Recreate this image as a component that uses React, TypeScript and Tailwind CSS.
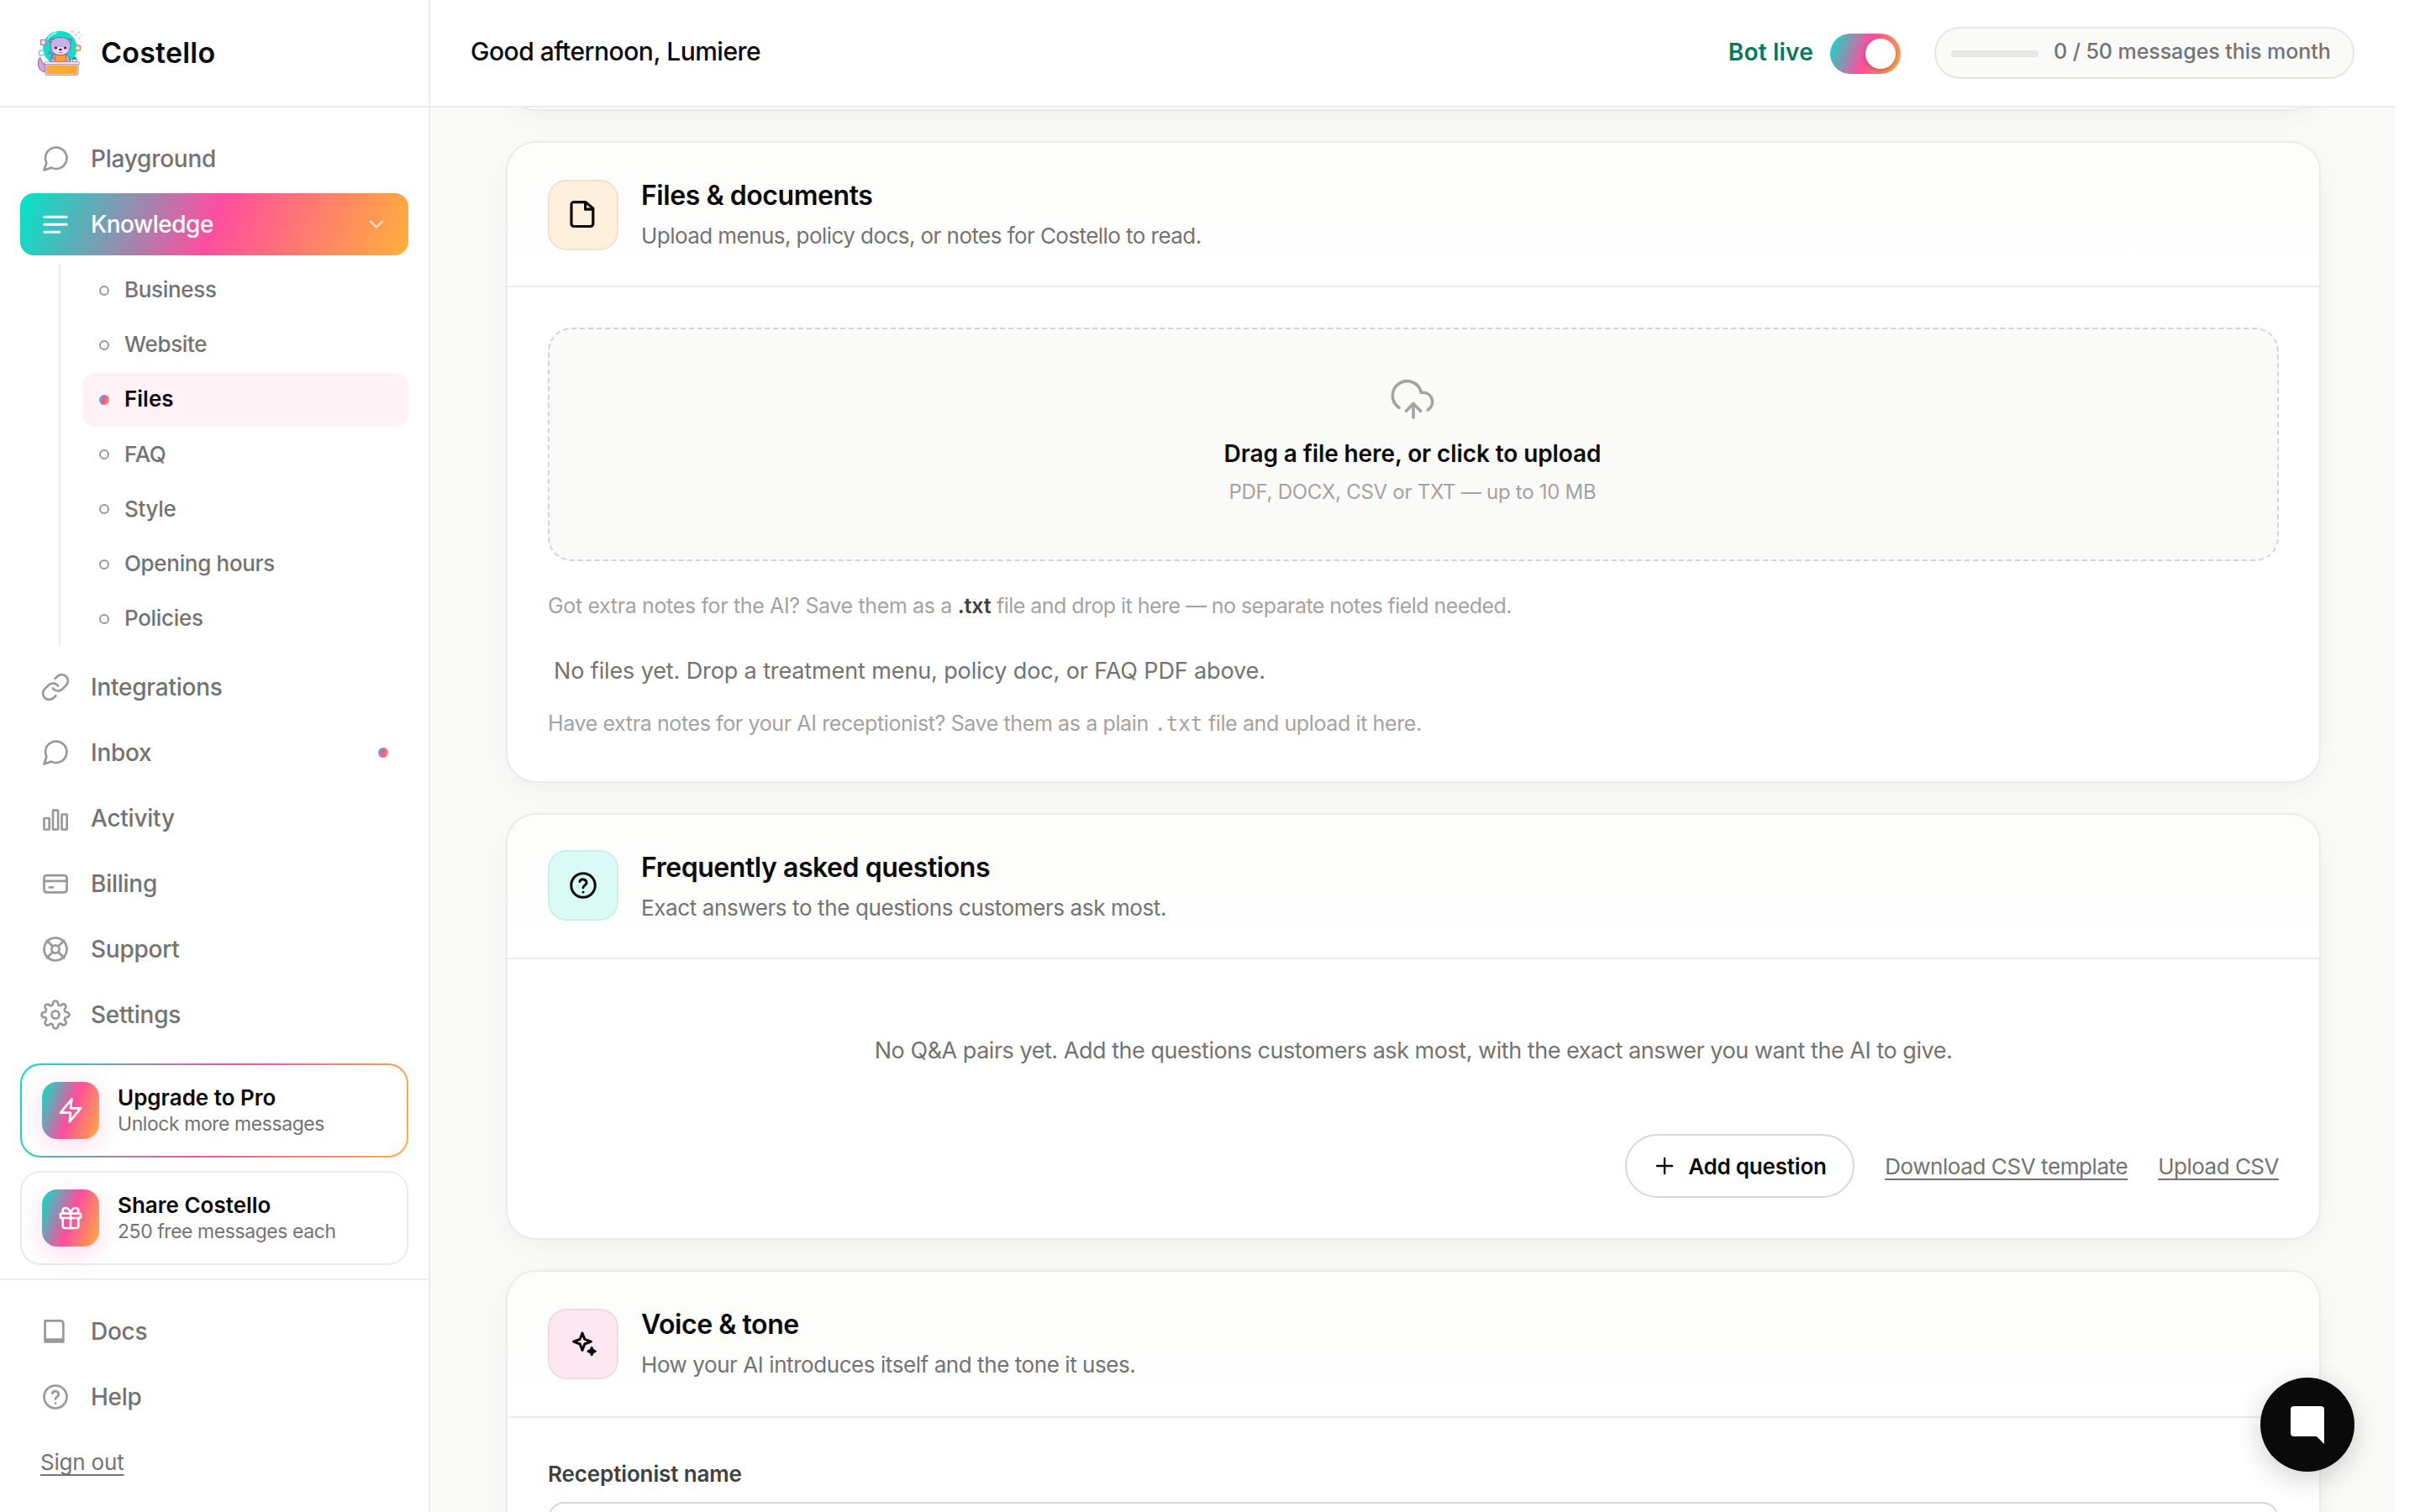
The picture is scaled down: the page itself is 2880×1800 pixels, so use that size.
import React from "react";
import { Gift, Link as LinkIcon } from "lucide-react";

type IconProps = { className?: string };

const Svg = ({
  children,
  className = "",
  width = 1.8,
}: {
  children: React.ReactNode;
  className?: string;
  width?: number;
}) => (
  <svg
    viewBox="0 0 24 24"
    fill="none"
    stroke="currentColor"
    strokeWidth={width}
    strokeLinecap="round"
    strokeLinejoin="round"
    className={`shrink-0 ${className}`}
  >
    {children}
  </svg>
);

const ChatIcon = ({ className }: IconProps) => (
  <Svg className={className}>
    <path d="M21 11.5a8.38 8.38 0 0 1-.9 3.8 8.5 8.5 0 0 1-7.6 4.7 8.38 8.38 0 0 1-3.8-.9L3 21l1.9-5.7a8.38 8.38 0 0 1-.9-3.8 8.5 8.5 0 0 1 4.7-7.6 8.38 8.38 0 0 1 3.8-.9h.5a8.48 8.48 0 0 1 8 8v.5z" />
  </Svg>
);

const LinesIcon = ({ className }: IconProps) => (
  <Svg className={className} width={2}>
    <path d="M3.2 6.2h17.6M3.2 12.2h17.6M3.2 18.2h12" />
  </Svg>
);

const ChainIcon = ({ className }: IconProps) => (
  <LinkIcon strokeWidth={1.8} className={`shrink-0 ${className}`} />
);

const BarsIcon = ({ className }: IconProps) => (
  <Svg className={className}>
    <rect x="3" y="12" width="4.1" height="9" rx=".3" />
    <rect x="10" y="5.8" width="4.1" height="15.2" rx=".3" />
    <rect x="17" y="9" width="4.1" height="12" rx=".3" />
  </Svg>
);

const CardIcon = ({ className }: IconProps) => (
  <Svg className={className}>
    <rect x="3" y="5.4" width="18" height="13.5" rx="2" />
    <path d="M3 9.9h18M7.2 14.9h2.8" />
  </Svg>
);

const BuoyIcon = ({ className }: IconProps) => (
  <Svg className={className}>
    <circle cx="12" cy="12" r="9" />
    <circle cx="12" cy="12" r="3.1" />
    <path d="M5.2 5.2l4.5 4.5M14.3 14.3l4.5 4.5M18.8 5.2l-4.5 4.5M9.7 14.3l-4.5 4.5" />
  </Svg>
);

const GearIcon = ({ className }: IconProps) => (
  <Svg className={className}>
    <circle cx="12" cy="12" r="3" />
    <path d="M19.4 15a1.65 1.65 0 0 0 .33 1.82l.06.06a2 2 0 1 1-2.83 2.83l-.06-.06a1.65 1.65 0 0 0-1.82-.33 1.65 1.65 0 0 0-1 1.51V21a2 2 0 0 1-4 0v-.09A1.65 1.65 0 0 0 9 19.4a1.65 1.65 0 0 0-1.82.33l-.06.06a2 2 0 1 1-2.83-2.83l.06-.06a1.65 1.65 0 0 0 .33-1.82 1.65 1.65 0 0 0-1.51-1H3a2 2 0 0 1 0-4h.09A1.65 1.65 0 0 0 4.6 9a1.65 1.65 0 0 0-.33-1.82l-.06-.06a2 2 0 1 1 2.83-2.83l.06.06a1.65 1.65 0 0 0 1.82.33H9a1.65 1.65 0 0 0 1-1.51V3a2 2 0 0 1 4 0v.09a1.65 1.65 0 0 0 1 1.51 1.65 1.65 0 0 0 1.82-.33l.06-.06a2 2 0 1 1 2.83 2.83l-.06.06a1.65 1.65 0 0 0-.33 1.82V9a1.65 1.65 0 0 0 1.51 1H21a2 2 0 0 1 0 4h-.09a1.65 1.65 0 0 0-1.51 1z" />
  </Svg>
);

const BookIcon = ({ className }: IconProps) => (
  <Svg className={className}>
    <path d="M3.7 3.6h12.5a2 2 0 0 1 2 2v14.8M3.7 3.6v16.7h13.9M3.7 18.4h14.5" />
  </Svg>
);

const QuestionIcon = ({ className, width }: IconProps & { width?: number }) => (
  <Svg className={className} width={width}>
    <circle cx="12" cy="12" r="9" />
    <path d="M9.4 9.2a2.7 2.7 0 0 1 5.2.8c0 1.8-2.6 2-2.6 3.7" />
    <path d="M12 17.1h.01" />
  </Svg>
);

const ZapIcon = ({ className }: IconProps) => (
  <Svg className={className} width={2}>
    <path d="M13 2L3 14h9l-1 8 10-12h-9l1-8z" />
  </Svg>
);

const FileIcon = () => (
  <svg viewBox="0 0 40 40" fill="none" stroke="currentColor" strokeWidth="3.2" strokeLinejoin="round" className="size-10">
    <path d="M9 4.6h13.6l9.2 7.4v18.5a3 3 0 0 1-3 3H9a3 3 0 0 1-3-3V7.6a3 3 0 0 1 3-3z" />
    <path d="M22.6 4.6v8.6h9.2" />
  </svg>
);

const SparkleIcon = () => (
  <svg viewBox="0 0 40 40" fill="none" stroke="currentColor" strokeWidth="3" strokeLinejoin="round" className="size-10">
    <path d="M19 7l2.8 7.4 7.6 2.8-7.6 2.8L19 27.4 16.2 20l-7.6-2.8 7.6-2.8z" />
    <path fill="currentColor" d="M30.2 24.6l1.2 2.9 2.9 1.2-2.9 1.2-1.2 2.9-1.2-2.9-2.9-1.2 2.9-1.2z" />
  </svg>
);

const CloudIcon = () => (
  <svg
    viewBox="0 0 56 56"
    fill="none"
    stroke="currentColor"
    strokeWidth="3.6"
    strokeLinecap="round"
    strokeLinejoin="round"
    className="size-14 text-[#a3a3a3]"
  >
    <path d="M11 38.3A17.2 17.2 0 1 1 37.3 20.3h3.2a11.2 11.2 0 0 1 4.8 20.7" />
    <path d="M28 33.4v16.8M19.5 42.3L28 33.4l8.5 8.9" />
  </svg>
);

const OtterLogo = () => (
  <svg viewBox="0 0 56 56" className="size-14 shrink-0">
    <circle cx="27.3" cy="22" r="20.2" fill="#0ee0cb" />
    <path d="M13 12c2-4.5 6-7 10-8" fill="none" stroke="#c6fff7" strokeWidth="1.3" strokeLinecap="round" />
    <path d="M9 41c-3 0-3.5-3-4.5-6.500S1 36 1.600 42s4 8.500 8.400 8.500z" fill="#d9a5dc" stroke="#6b5a94" strokeWidth=".9" />
    <path d="M16.5 39c0-8 4-11 11-11s12 3 12 11z" fill="#d3a0dc" stroke="#5e4f86" strokeWidth=".8" />
    <circle cx="17.5" cy="13.5" r="2.6" fill="#b794d6" stroke="#5e4f86" strokeWidth=".8" />
    <circle cx="38.5" cy="13.5" r="2.6" fill="#b794d6" stroke="#5e4f86" strokeWidth=".8" />
    <path
      d="M28 9.500c8 0 12 4 12 10.500S35.500 30.500 28 30.500 16 26.500 16 20 20 9.500 28 9.500z"
      fill="#c9b0e8"
      stroke="#5e4f86"
      strokeWidth=".7"
    />
    <ellipse cx="28" cy="25.5" rx="8.5" ry="4.6" fill="#f3d6ec" />
    <circle cx="22.5" cy="22" r="1.5" fill="#2b2140" />
    <circle cx="33.5" cy="22" r="1.5" fill="#2b2140" />
    <ellipse cx="28" cy="24" rx="1.8" ry="1.2" fill="#2b2140" />
    <path d="M25.5 27c1.5 1 3.5 1 5 0" fill="none" stroke="#5e4f86" strokeWidth=".7" />
    <path d="M14 29.5c-1.5-2 1.5-3.500 2.500-1.500s2 6 4 7.500" fill="#b794d6" stroke="#5e4f86" strokeWidth=".9" />
    <rect x="21.7" y="30.5" width="12.8" height="8.3" rx="1" fill="#ffa02e" stroke="#8a5a3a" strokeWidth=".7" />
    <path d="M42.5 36.5c-.5-3 1-4 2.500-4s2.500 1.500 2 4" fill="#3f8e8f" />
    <rect x="42.2" y="35.5" width="5" height="3.2" fill="#e8f4f4" stroke="#5e4f86" strokeWidth=".6" />
    <rect x="9" y="38.7" width="41.5" height="3.2" rx="1" fill="#f7ecf5" stroke="#8d7aa8" strokeWidth=".7" />
    <rect x="10.5" y="42" width="38" height="12" rx="1" fill="#ffa833" stroke="#e3d3e6" strokeWidth="1.4" />
    <rect x="9.8" y="41.5" width="39.4" height="13" rx="1.5" fill="none" stroke="#8d7aa8" strokeWidth=".6" />
    <rect x="4.5" y="12.5" width="5.8" height="5.8" rx="1.3" fill="#fff" stroke="#d9669c" strokeWidth="1.5" />
    <rect x="2.5" y="25.3" width="5.8" height="5.4" rx="1.3" fill="#fff" stroke="#76cfd0" strokeWidth="1.5" />
    <rect x="45.6" y="19.3" width="6" height="5.8" rx="1.3" fill="#ffe9c4" stroke="#c08a4a" strokeWidth="1.5" />
    <circle cx="42" cy="2.8" r="1.3" fill="none" stroke="#f5a3c4" strokeWidth=".8" />
    <circle cx="46.5" cy="6.5" r="1.1" fill="#b9b4ea" />
    <circle cx="49.5" cy="3.5" r=".8" fill="#ff5a8f" />
    <circle cx="53.5" cy="6.8" r=".7" fill="#f5a3c4" />
    <circle cx="50.3" cy="10.5" r="1.2" fill="#a7ece4" />
    <circle cx="53" cy="14.5" r=".7" fill="#f5a3c4" />
  </svg>
);

const NavItem = ({
  label,
  Icon,
  dot,
}: {
  label: string;
  Icon: (p: IconProps) => React.ReactNode;
  dot?: boolean;
}) => (
  <a className="flex h-[74px] items-center gap-6 px-6 text-[28px] font-medium tracking-[-0.25px] text-[#737373]">
    <Icon className="size-9 text-[#999]" />
    <span className="flex-1">{label}</span>
    {dot && (
      <span className="size-3 rounded-full bg-[linear-gradient(110deg,#00e5c7_0%,#ff4d9f_50%,#ffb03a_100%)]" />
    )}
  </a>
);

const subItems = ["Business", "Website", "Files", "FAQ", "Style", "Opening hours", "Policies"];

const PromoCard = ({
  title,
  text,
  highlight,
  children,
}: {
  title: string;
  text: string;
  highlight?: boolean;
  children: React.ReactNode;
}) => (
  <div
    className={
      highlight
        ? "flex h-28 items-center gap-[22px] rounded-[24px] border-2 border-transparent pl-6 [background:linear-gradient(#fff,#fff)_padding-box,linear-gradient(110deg,#00e5c7_0%,#ff4d9f_50%,#ffb03a_100%)_border-box]"
        : "flex h-28 items-center gap-[22px] rounded-[24px] border-2 border-[#ebebeb] bg-white pl-6"
    }
  >
    <div className="flex size-[68px] items-center justify-center rounded-[18px] bg-[linear-gradient(110deg,#00e5c7_0%,#ff4d9f_50%,#ffb03a_100%)] text-white shadow-[0_8px_28px_rgba(255,77,159,0.2)]">
      {children}
    </div>
    <div className="pb-px">
      <div className="text-[26px] leading-8 font-semibold text-[#0a0a0a]">{title}</div>
      <div className="text-[23px] leading-[30px] tracking-[-0.44px] text-[#737373]">{text}</div>
    </div>
  </div>
);

const Sidebar = () => (
  <aside className="flex w-[512px] shrink-0 flex-col border-r-2 border-[#ebebeb] bg-white">
    <div className="flex h-32 shrink-0 items-center gap-5 border-b-2 border-[#ebebeb] pl-11">
      <OtterLogo />
      <span className="pb-0.5 text-[34px] font-semibold tracking-[0.2px] text-[#0a0a0a]">Costello</span>
    </div>

    <nav className="flex flex-col gap-1 px-6 pt-6">
      <NavItem label="Playground" Icon={ChatIcon} />
      <a className="flex h-[74px] items-center gap-6 rounded-[16px] bg-[linear-gradient(110deg,#00e5c7_0%,#ff4d9f_50%,#ffb03a_100%)] px-6 text-[28px] font-medium tracking-[-0.5px] text-white">
        <LinesIcon className="size-9" />
        <span className="flex-1">Knowledge</span>
        <Svg className="size-7 opacity-75" width={2}>
          <path d="M6 9l6 6 6-6" />
        </Svg>
      </a>
      <div className="mt-1.5 mb-[9px] ml-[46px] flex flex-col gap-0.5 border-l-2 border-[#ebebeb] pl-[26px]">
        {subItems.map((item) =>
          item === "Files" ? (
            <a
              key={item}
              className="flex h-[63.2px] items-center gap-[18px] rounded-[16px] bg-[#fff2f6] pl-5 text-[26px] font-semibold text-[#0a0a0a]"
            >
              <span className="size-3 rounded-full bg-[linear-gradient(110deg,#00e5c7_0%,#ff4d9f_50%,#ffb03a_100%)]" />
              <span className="pb-0.5">{item}</span>
            </a>
          ) : (
            <a
              key={item}
              className="flex h-[63.2px] items-center gap-[18px] pl-5 text-[26px] font-medium tracking-[-0.32px] text-[#737373]"
            >
              <span className="size-3 rounded-full border-2 border-[#999]" />
              <span className="pb-0.5">{item}</span>
            </a>
          )
        )}
      </div>
      <NavItem label="Integrations" Icon={ChainIcon} />
      <NavItem label="Inbox" Icon={ChatIcon} dot />
      <NavItem label="Activity" Icon={BarsIcon} />
      <NavItem label="Billing" Icon={CardIcon} />
      <NavItem label="Support" Icon={BuoyIcon} />
      <NavItem label="Settings" Icon={GearIcon} />
    </nav>

    <div className="mt-[21px] flex flex-col gap-4 border-b-2 border-[#ebebeb] px-6 pb-4">
      <PromoCard title="Upgrade to Pro" text="Unlock more messages" highlight>
        <ZapIcon className="size-8" />
      </PromoCard>
      <PromoCard title="Share Costello" text="250 free messages each">
        <Gift strokeWidth={2} className="size-8" />
      </PromoCard>
    </div>

    <div className="flex flex-col gap-1 px-6 pt-6">
      <NavItem label="Docs" Icon={BookIcon} />
      <NavItem label="Help" Icon={QuestionIcon} />
      <div className="mt-[19px] ml-6 text-[26px] leading-9 tracking-[-0.2px] text-[#737373]">
        <a className="underline decoration-2 underline-offset-[5px] [text-decoration-skip-ink:none]">Sign out</a>
      </div>
    </div>
  </aside>
);

const Topbar = () => (
  <header className="relative z-10 flex h-32 shrink-0 items-center border-b-2 border-[#ebebeb] bg-white px-12">
    <h1 className="flex-1 pb-[3px] text-[30px] font-medium tracking-[-0.5px] text-[#0a0a0a]">
      Good afternoon, Lumiere
    </h1>
    <span className="pb-0.5 text-[28px] font-semibold tracking-[0.2px] text-[#067a57]">Bot live</span>
    <span className="mt-0.5 ml-5 flex h-12 w-[84px] items-center justify-end rounded-full bg-[linear-gradient(110deg,#00e5c7_0%,#ff4d9f_50%,#ffb03a_100%)] pr-1.5">
      <span className="size-9 rounded-full bg-white shadow-[0_2px_6px_rgba(0,0,0,0.25)]" />
    </span>
    <span className="ml-10 flex h-[62px] w-[500px] items-center gap-[18px] rounded-full border-2 border-[#e6e6e4] bg-[#fafaf8] pl-[18px]">
      <span className="mt-0.5 h-2 w-[104px] rounded-full bg-[#e6e6e4]" />
      <span className="pb-0.5 text-[25px] font-medium tracking-[-0.06px] whitespace-nowrap text-[#737373]">
        0 / 50 messages this month
      </span>
    </span>
  </header>
);

const Card = ({
  title,
  text,
  icon,
  iconClass,
  headClass,
  children,
}: {
  title: string;
  text: string;
  icon: React.ReactNode;
  iconClass: string;
  headClass: string;
  children: React.ReactNode;
}) => (
  <section className="shrink-0 overflow-hidden rounded-[36px] border-2 border-[#ebebeb] bg-white shadow-[0_8px_32px_rgba(10,10,10,0.045)]">
    <div
      className={`flex gap-[27px] border-b-2 border-[#ebebeb] bg-linear-to-b from-[#fcfcfb] to-white px-12 pt-11 ${headClass}`}
    >
      <div
        className={`flex size-[84px] items-center justify-center rounded-[22px] border-2 text-[#0a0a0a] ${iconClass}`}
      >
        {icon}
      </div>
      <div className="-mt-px">
        <h2 className="text-[32px] leading-10 font-semibold tracking-[-0.45px] text-[#0a0a0a]">{title}</h2>
        <p className="mt-2.5 text-[26px] leading-9 text-[#737373]">{text}</p>
      </div>
    </div>
    {children}
  </section>
);

const Main = () => (
  <main className="flex min-h-0 flex-1 flex-col gap-9 overflow-hidden pr-[88px] pl-[90px]">
    {/* tail of the card scrolled under the top bar */}
    <div className="-mt-[76px] h-20 shrink-0 rounded-[36px] border-2 border-[#ebebeb] bg-white shadow-[0_8px_32px_rgba(10,10,10,0.045)]" />

    <Card
      title="Files & documents"
      text="Upload menus, policy docs, or notes for Costello to read."
      icon={<FileIcon />}
      iconClass="border-[#f0e2ce] bg-[#fff0dd]"
      headClass="h-[172px] tracking-[-0.56px]"
    >
      <div className="px-12 pt-12 pb-[50px]">
        <div className="flex h-[278px] flex-col items-center rounded-[28px] border-2 border-dashed border-[#d4d4d4] bg-[#fafaf8] pt-[55px]">
          <CloudIcon />
          <div className="mt-[19px] pr-0.5 text-[28px] leading-9 font-semibold tracking-[-0.1px] text-[#0a0a0a]">
            Drag a file here, or click to upload
          </div>
          <div className="mt-[11px] pr-0.5 text-[24px] leading-[34px] tracking-[-0.27px] text-[#a3a3a3]">
            PDF, DOCX, CSV or TXT — up to 10 MB
          </div>
        </div>
        <p className="mt-[34px] text-[25px] leading-[38px] tracking-[-0.55px] text-[#a3a3a3]">
          <span className="tracking-[-0.36px]">Got extra notes for the AI? Save them as a </span>
          <strong className="font-semibold tracking-[-0.1px] text-[#404040]">.txt</strong> file and drop it
          here — no separate notes field needed.
        </p>
        <p className="mt-[39px] pl-[7px] text-[27px] leading-10 tracking-[-0.12px] text-[#737373]">
          No files yet. Drop a treatment menu, policy doc, or FAQ PDF above.
        </p>
        <p className="mt-[23px] text-[25px] leading-[38px] tracking-[-0.39px] text-[#a3a3a3]">
          Have extra notes for your AI receptionist? Save them as a plain{" "}
          <code className="font-['DejaVu_Sans_Mono',monospace] text-[24px] leading-none tracking-normal">
            .txt
          </code>{" "}
          file and upload it here.
        </p>
      </div>
    </Card>

    <Card
      title="Frequently asked questions"
      text="Exact answers to the questions customers ask most."
      icon={<QuestionIcon className="size-[38px]" width={1.9} />}
      iconClass="-mt-0.5 border-[#cbeee8] bg-[#d9faf5]"
      headClass="h-[172px] tracking-[-0.39px]"
    >
      <div className="px-12 pt-[89px] pb-12">
        <p className="text-center text-[27px] leading-10 tracking-[-0.47px] text-[#737373]">
          No Q&A pairs yet. Add the questions customers ask most, with the exact answer you want the AI to
          give.
        </p>
        <div className="mt-[79px] flex items-center justify-end gap-9">
          <button className="flex h-[76px] w-[273px] items-center gap-4 rounded-full border-2 border-[#d8d8d8] bg-white pl-[33px] text-[26px] font-semibold tracking-[-0.2px] whitespace-nowrap text-[#0a0a0a]">
            <Svg className="size-6" width={2.4}>
              <path d="M12 3v18M3 12h18" />
            </Svg>
            Add question
          </button>
          <a className="text-[26px] tracking-[-0.42px] text-[#737373] underline decoration-2 underline-offset-[5px] [text-decoration-skip-ink:none]">
            Download CSV template
          </a>
          <a className="text-[26px] tracking-[-0.5px] text-[#737373] underline decoration-2 underline-offset-[5px] [text-decoration-skip-ink:none]">
            Upload CSV
          </a>
        </div>
      </div>
    </Card>

    <Card
      title="Voice & tone"
      text="How your AI introduces itself and the tone it uses."
      icon={<SparkleIcon />}
      iconClass="border-[#efdbe4] bg-[#fde8f1]"
      headClass="h-[174px] tracking-[-0.43px]"
    >
      <div className="px-12 pt-[49px]">
        <label className="block text-[26px] leading-9 font-semibold tracking-[-0.12px] text-[#404040]">
          Receptionist name
        </label>
        <div className="mt-[15px] h-20 rounded-[20px] border-2 border-[#d8d8d8] bg-white" />
      </div>
    </Card>
  </main>
);

export default function App() {
  return (
    <div className="relative flex h-[1800px] w-[2850px] overflow-hidden bg-[#fafaf8] font-['Inter','Liberation_Sans',sans-serif]">
      <Sidebar />
      <div className="flex min-w-0 flex-1 flex-col">
        <Topbar />
        <Main />
      </div>
      <button className="absolute right-12 bottom-12 z-20 flex size-28 items-center justify-center rounded-full bg-[#0a0a0a] shadow-[0_8px_32px_rgba(0,0,0,0.18)]">
        <svg viewBox="0 0 40 45" className="h-[45px] w-10 fill-white">
          <path d="M4 0h32a4 4 0 0 1 4 4v41l-9-9H4a4 4 0 0 1-4-4V4a4 4 0 0 1 4-4z" />
        </svg>
      </button>
    </div>
  );
}
